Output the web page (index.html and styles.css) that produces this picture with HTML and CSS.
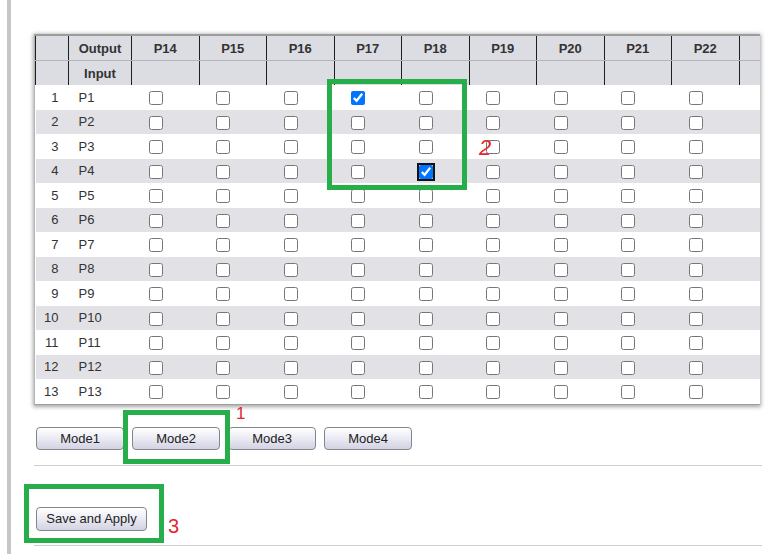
FILE: index.html
```html
<!DOCTYPE html>
<html lang="en">
<head>
<meta charset="utf-8">
<title>Port Mapping</title>
<link rel="stylesheet" href="styles.css">
</head>
<body>
<div class="page">
  <div class="rule"></div>
  <main class="content">
    <div class="grid-frame">
      <table class="matrix">
        <colgroup>
          <col class="c-idx"><col class="c-name">
          <col class="c-port"><col class="c-port"><col class="c-port"><col class="c-port"><col class="c-port">
          <col class="c-port"><col class="c-port"><col class="c-port"><col class="c-port"><col class="c-rest">
        </colgroup>
        <thead>
          <tr class="h1">
            <th></th><th>Output</th>
            <th>P14</th><th>P15</th><th>P16</th><th>P17</th><th>P18</th>
            <th>P19</th><th>P20</th><th>P21</th><th>P22</th><th></th>
          </tr>
          <tr class="h2">
            <th></th><th>Input</th>
            <th></th><th></th><th></th><th></th><th></th>
            <th></th><th></th><th></th><th></th><th></th>
          </tr>
        </thead>
        <tbody id="rows"></tbody>
      </table>
    </div>
    <div class="modes">
      <button class="btn mode">Mode1</button>
      <button class="btn mode">Mode2</button>
      <button class="btn mode">Mode3</button>
      <button class="btn mode">Mode4</button>
    </div>
    <hr class="sep">
    <div class="actions">
      <button class="btn save">Save and Apply</button>
    </div>
    <hr class="sep">
  </main>

  <div class="mark mark-1"></div>
  <div class="mark mark-2"></div>
  <div class="mark mark-3"></div>
  <span class="num num-1">1</span>
  <span class="num num-2">2</span>
  <span class="num num-3">3</span>
</div>
<script src="app.js"></script>
</body>
</html>
```

FILE: app.js
```js
(function () {
  var body = document.getElementById('rows');
  var checked = { '1-17': 1, '4-18': 2 };
  var html = '';
  for (var r = 1; r <= 13; r++) {
    html += '<tr><td class="idx">' + r + '</td><td class="name">P' + r + '</td>';
    for (var p = 14; p <= 22; p++) {
      var k = checked[r + '-' + p];
      var attrs = k ? ' checked' : '';
      var cls = k === 2 ? ' class="focus"' : '';
      html += '<td class="cb"><input type="checkbox"' + cls + attrs + '></td>';
    }
    html += '<td class="rest"></td></tr>';
  }
  body.innerHTML = html;
})();
```

FILE: styles.css
```css
html, body {
  margin: 0;
  padding: 0;
  background: #fff;
}

body {
  font-family: "Liberation Sans", Arial, sans-serif;
  font-size: 13px;
  color: #333;
}

.page {
  position: relative;
  display: flex;
  width: 771px;
  height: 554px;
  overflow: hidden;
}

.rule {
  flex: none;
  width: 4px;
  margin-left: 7px;
  background: #c6c6c6;
}

.content {
  flex: none;
  padding: 34px 0 0 23px;
}

.grid-frame {
  width: 725px;
  overflow: hidden;
  border-top: 2px solid #9c9c9c;
  border-left: 1px solid #b5b5b5;
  border-bottom: 1px solid #a0a0a0;
  box-shadow: 0 1px 4px 1px rgba(0, 0, 0, 0.35);
}

.matrix {
  border-collapse: collapse;
  table-layout: fixed;
  width: 725px;
}

.c-idx { width: 33px; }
.c-name { width: 63px; }
.c-port { width: 67.5px; }
.c-rest { width: 21.5px; }

.matrix th {
  background: #dcdce3;
  font-weight: bold;
  font-size: 13px;
  color: #333;
  text-align: center;
  padding: 0;
  border-left: 1px solid #1e1e1e;
}

.matrix .h1 th {
  height: 24px;
  border-bottom: 1px solid #b4b4ba;
}

.matrix .h2 th {
  height: 24px;
}

.matrix td {
  height: 24.5px;
  padding: 0;
  vertical-align: middle;
}

.matrix tbody tr:nth-child(even) td {
  background: #e1e1e6;
}

.matrix .idx {
  text-align: right;
  padding-right: 10px;
}

.matrix .name {
  text-align: left;
  padding-left: 10px;
}

.matrix .cb {
  text-align: center;
  padding-right: 19px;
}

.matrix input[type="checkbox"] {
  width: 14px;
  height: 14px;
  margin: 0;
  vertical-align: middle;
}

.matrix input.focus {
  outline: 2px solid #111;
  outline-offset: 0;
  border-radius: 3px;
}

.modes {
  display: flex;
  gap: 8px;
  margin-top: 22px;
  padding-left: 2px;
}

.btn {
  font-family: "Liberation Sans", Arial, sans-serif;
  font-size: 13px;
  color: #222;
  background: linear-gradient(#ffffff, #eaeaf3 50%, #d2d2e2);
  border: 1px solid #85858f;
  border-radius: 4px;
  padding: 0;
  cursor: pointer;
}

.mode {
  width: 88px;
  height: 23px;
}

.sep {
  width: 728px;
  margin: 15px 0 0 0;
  border: 0;
  border-top: 1px solid #cfcfcf;
  height: 0;
}

.actions {
  padding: 41px 0 0 2px;
}

.save {
  width: 111px;
  height: 24px;
}

.actions + .sep {
  margin-top: 14px;
}

.mark {
  position: absolute;
  border: 5px solid #27ae4a;
  box-sizing: border-box;
}

.mark-1 { left: 123px; top: 410px; width: 107px; height: 54px; }
.mark-2 { left: 327px; top: 79px; width: 140px; height: 111px; }
.mark-3 { left: 24px; top: 484px; width: 140px; height: 59px; }

.num {
  position: absolute;
  color: #e3262e;
  line-height: 1;
  font-family: "Liberation Sans", Arial, sans-serif;
}

.num-1 { left: 236px; top: 405px; font-size: 17px; }
.num-2 { left: 479px; top: 137px; font-size: 22px; font-style: italic; }
.num-3 { left: 168px; top: 516px; font-size: 20px; }
```
